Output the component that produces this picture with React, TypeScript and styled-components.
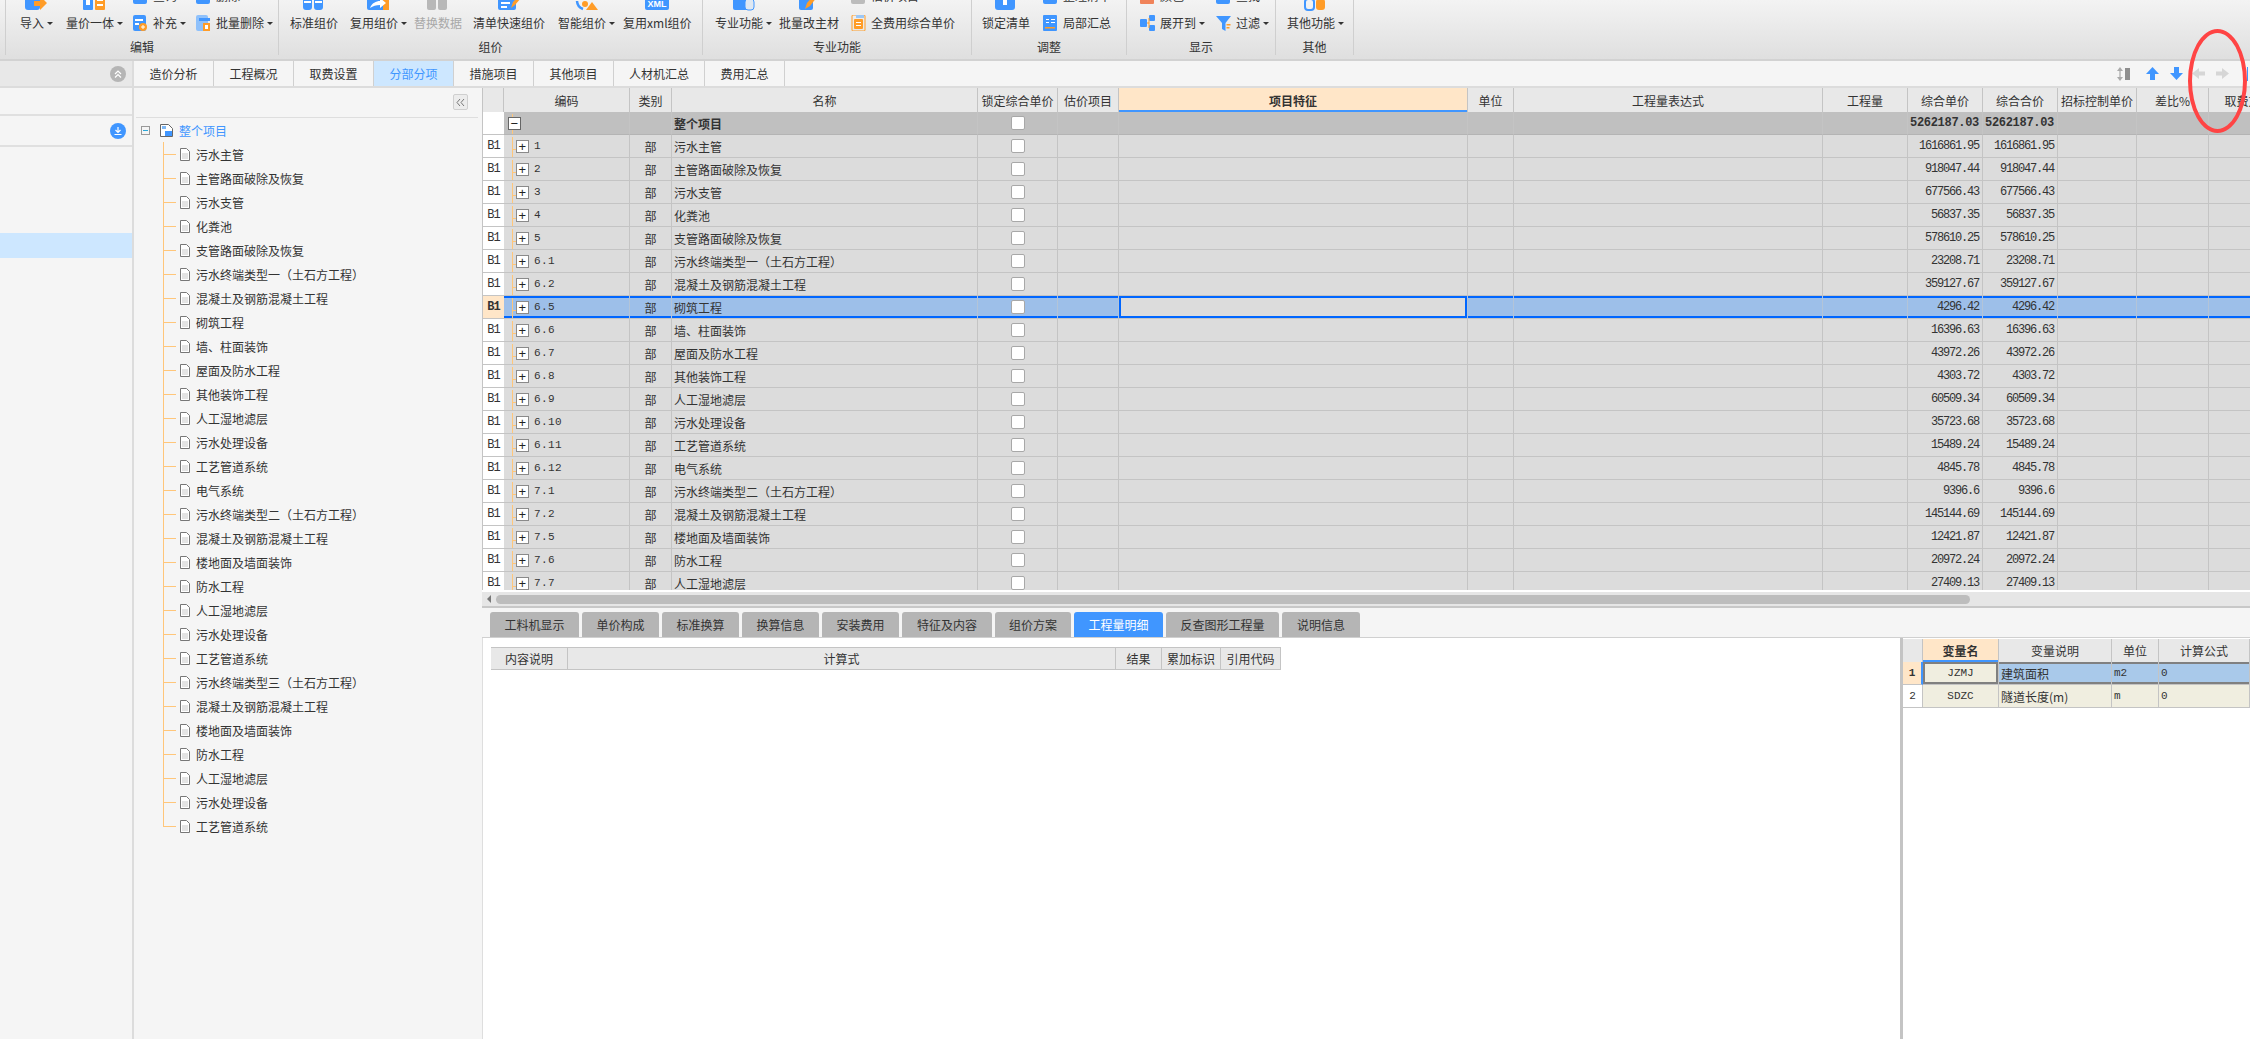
import React from 'react'
import styled, { createGlobalStyle } from 'styled-components'

const GlobalStyle = createGlobalStyle`
  html, body { margin: 0; padding: 0; background: #fff; }
  body {
    font-family: "Noto Sans CJK SC", "Noto Sans", sans-serif;
    font-size: 12px;
    color: #333;
  }
  * { box-sizing: border-box; }
`

const BLUE = '#4096ff'
const ORANGE = '#ff9c27'
const LINE = '#c4c4c4'
const MONO = '"Liberation Mono", "Noto Sans CJK SC", monospace'

const Page = styled.div`
  position: relative;
  width: 2250px;
  height: 1039px;
  overflow: hidden;
  display: flex;
  flex-direction: column;
  background: #f5f5f5;
`

/* ribbon */
const Ribbon = styled.div`
  height: 61px;
  flex: none;
  display: flex;
  align-items: flex-end;
  padding: 0 0 4px 5px;
  overflow: hidden;
  background: linear-gradient(#f3f3f3, #dfdfdf);
  border-bottom: 2px solid #d2d2d2;
`
const Group = styled.div<{ $w: number; $first?: boolean }>`
  width: ${(p) => p.$w}px;
  flex: none;
  height: 55px;
  display: flex;
  flex-direction: column;
  border-right: 1px solid #cfcfcf;
  border-left: ${(p) => (p.$first ? '1px solid #cfcfcf' : '0')};
`
const Tools = styled.div`
  height: 39px;
  flex: none;
  display: flex;
  align-items: flex-end;
  padding-bottom: 8px;
`
const GroupLabel = styled.div`
  height: 16px;
  line-height: 16px;
  text-align: center;
`
const BigTool = styled.div<{ $ml: number }>`
  margin-left: ${(p) => p.$ml}px;
  flex: none;
  display: flex;
  flex-direction: column;
  align-items: center;
  gap: 4px;
`
const ToolStack = styled.div<{ $ml: number }>`
  margin-left: ${(p) => p.$ml}px;
  flex: none;
  display: flex;
  flex-direction: column;
  gap: 11px;
`
const SmallTool = styled.div`
  display: flex;
  align-items: center;
  gap: 5px;
  height: 16px;
`
const ToolText = styled.span<{ $off?: boolean }>`
  display: flex;
  align-items: center;
  line-height: 16px;
  white-space: nowrap;
  color: ${(p) => (p.$off ? '#a8a8a8' : '#333')};
`
const Caret = styled.i`
  width: 0;
  height: 0;
  margin-left: 3px;
  border: 3px solid transparent;
  border-top: 3px solid #333;
  border-bottom: 0;
`

const icons: Record<string, React.ReactNode> = {
  importIn: (
    <>
      <rect x="1" y="3" width="15" height="20" rx="3" fill={BLUE} />
      <path d="M10 14h6v-5l7 7-7 7v-4h-6z" fill={ORANGE} />
    </>
  ),
  priceGrid: (
    <>
      <rect x="1" y="8" width="10" height="15" rx="1" fill={BLUE} />
      <rect x="13" y="8" width="10" height="15" rx="1" fill={ORANGE} />
      <path d="M4 13h4v5H4zM15 12h6v2h-6zM15 17h6v2h-6z" fill="#fff" />
    </>
  ),
  panes: (
    <>
      <rect x="2" y="4" width="9" height="19" rx="3" fill={BLUE} />
      <rect x="13" y="4" width="9" height="19" rx="3" fill={BLUE} />
      <path d="M3 14h7v2H3zM14 14h7v2h-7z" fill="#fff" />
    </>
  ),
  reuse: (
    <>
      <rect x="1" y="4" width="22" height="19" rx="2" fill={BLUE} />
      <rect x="17" y="13" width="6" height="10" fill={ORANGE} />
      <path d="M4 21c2-5 6-7 10-7v-3l6 5-6 5v-3c-4 0-7 1-10 3z" fill="#fff" />
    </>
  ),
  grayBlocks: (
    <>
      <rect x="2" y="4" width="9" height="19" rx="2" fill="#b8b8b8" />
      <rect x="13" y="4" width="9" height="19" rx="2" fill="#b8b8b8" />
    </>
  ),
  quick: (
    <>
      <rect x="2" y="4" width="18" height="19" rx="2" fill={BLUE} />
      <path d="M5 15h9v2H5zM5 19h6v2H5z" fill="#fff" />
      <path d="M15 21l2-6 6-6 2 2-6 7z" fill={ORANGE} />
    </>
  ),
  smart: (
    <>
      <path d="M3 14a9 9 0 0 0 6 8" stroke={BLUE} strokeWidth="2.5" fill="none" />
      <circle cx="11" cy="17" r="3" fill={ORANGE} />
      <path d="M12 23l6-8 6 8z" fill={ORANGE} />
    </>
  ),
  xml: (
    <>
      <rect x="1" y="2" width="24" height="21" rx="2" fill={BLUE} />
      <text x="13" y="20" textAnchor="middle" fontSize="9" fontWeight="700" fill="#fff" fontFamily="Liberation Sans">
        XML
      </text>
    </>
  ),
  device: (
    <>
      <rect x="2" y="4" width="16" height="19" rx="2" fill={BLUE} />
      <rect x="14" y="12" width="9" height="11" rx="3" fill="#dfe8f2" stroke={BLUE} />
    </>
  ),
  bulk: (
    <>
      <rect x="3" y="4" width="14" height="19" rx="2" fill={BLUE} />
      <path d="M9 22l2-6 7-8 3 2-7 9z" fill={ORANGE} />
    </>
  ),
  lock: (
    <>
      <rect x="2" y="2" width="20" height="21" rx="3" fill={BLUE} />
      <rect x="10" y="10" width="4" height="8" fill="#fff" />
    </>
  ),
  more: (
    <>
      <rect x="2" y="12" width="9" height="11" rx="3" fill="none" stroke={BLUE} strokeWidth="2" />
      <rect x="13" y="12" width="9" height="11" rx="3" fill={ORANGE} />
    </>
  ),
}

const smallIcons: Record<string, React.ReactNode> = {
  add: (
    <>
      <rect x="0" y="0" width="13" height="16" rx="2" fill={BLUE} />
      <path d="M2 4h8v2H2zM2 8h4v2H2z" fill="#fff" />
      <circle cx="10" cy="12" r="4" fill={ORANGE} />
      <path d="M8 11.5h4v1H8zM9.5 10h1v4h-1z" fill="#fff" />
    </>
  ),
  trash: (
    <>
      <rect x="0" y="0" width="12" height="16" rx="2" fill="#8fc1fb" />
      <rect x="3" y="3" width="11" height="3" fill={BLUE} />
      <rect x="7" y="8" width="7" height="8" fill={ORANGE} />
      <rect x="9" y="10" width="3" height="4" fill="#fff" />
    </>
  ),
  sum: (
    <>
      <rect x="1" y="0" width="13" height="16" rx="1" fill="none" stroke={ORANGE} />
      <rect x="3" y="4" width="9" height="10" rx="1" fill={ORANGE} />
      <path d="M5 7h5v1H5zM5 10h5v1H5z" fill="#fff" />
      <rect x="5" y="0" width="8" height="3" fill="#9cc7f5" />
    </>
  ),
  local: (
    <>
      <rect x="0" y="0" width="14" height="16" rx="1" fill={BLUE} />
      <path d="M3 4h3v1H3zM8 4h4v1H8zM3 7h3v1H3zM8 7h4v1H8z" fill="#fff" />
      <rect x="2" y="12" width="10" height="1.5" fill={ORANGE} />
    </>
  ),
  tree: (
    <>
      <rect x="0" y="4" width="7" height="8" rx="1" fill={BLUE} />
      <rect x="9" y="0" width="6" height="6" rx="1" fill={BLUE} />
      <rect x="9" y="10" width="6" height="6" rx="1" fill={BLUE} />
      <path d="M7 8h2M9 3v10" stroke={ORANGE} />
    </>
  ),
  filter: (
    <>
      <path d="M0 1h15L9.5 8v8L6 14V8z" fill={BLUE} />
      <path d="M10.5 9h4v1.4h-4zM10.5 12h3v1.4h-3z" fill={ORANGE} />
    </>
  ),
  plain: <rect x="0" y="0" width="14" height="16" rx="2" fill={BLUE} />,
  warm: <rect x="0" y="8" width="14" height="8" rx="1" fill="#f0835a" />,
  gray: <rect x="0" y="0" width="14" height="16" rx="2" fill="#bcbcbc" />,
}

const BigIcon = ({ kind }: { kind: string }) => (
  <svg width="26" height="24" viewBox="0 0 26 24" style={{ marginTop: -13 }}>
    {icons[kind]}
  </svg>
)
const SmallIcon = ({ kind }: { kind: string }) => (
  <svg width="15" height="16" viewBox="0 0 15 16">
    {smallIcons[kind]}
  </svg>
)

const Big = ({ ml, icon, label, menu, off }: { ml: number; icon: string; label: string; menu?: boolean; off?: boolean }) => (
  <BigTool $ml={ml}>
    <BigIcon kind={icon} />
    <ToolText $off={off}>
      {label}
      {menu && <Caret />}
    </ToolText>
  </BigTool>
)

const Small = ({ ml, top, topIcon, icon, label, menu }: { ml: number; top: string; topIcon: string; icon: string; label: string; menu?: boolean }) => (
  <ToolStack $ml={ml}>
    <SmallTool>
      <SmallIcon kind={topIcon} />
      <ToolText>{top}</ToolText>
    </SmallTool>
    <SmallTool>
      <SmallIcon kind={icon} />
      <ToolText>
        {label}
        {menu && <Caret />}
      </ToolText>
    </SmallTool>
  </ToolStack>
)

/* workspace */
const Body = styled.div`
  flex: 1;
  min-height: 0;
  display: flex;
`
const LeftNav = styled.div`
  width: 134px;
  flex: none;
  display: flex;
  flex-direction: column;
  border-right: 2px solid #dcdcdc;
`
const NavHead = styled.div`
  height: 27px;
  flex: none;
  display: flex;
  align-items: center;
  justify-content: flex-end;
  padding-right: 6px;
  background: #e8e8e8;
  border-bottom: 2px solid #dcdcdc;
`
const NavBlank = styled.div<{ $h: number; $line?: boolean }>`
  height: ${(p) => p.$h}px;
  flex: none;
  display: flex;
  align-items: center;
  justify-content: flex-end;
  padding-right: 6px;
  border-bottom: ${(p) => (p.$line ? '2px solid #e0e0e0' : '0')};
`
const NavActive = styled.div`
  height: 25px;
  flex: none;
  background: #cde7ff;
`
const RoundIcon = styled.span<{ $bg: string }>`
  width: 16px;
  height: 16px;
  border-radius: 50%;
  background: ${(p) => p.$bg};
  display: flex;
  align-items: center;
  justify-content: center;
`
const Main = styled.div`
  flex: 1;
  min-width: 0;
  display: flex;
  flex-direction: column;
`
const TabBar = styled.div`
  height: 27px;
  flex: none;
  display: flex;
  align-items: stretch;
  border-bottom: 2px solid #dcdcdc;
`
const PageTab = styled.div<{ $w: number; $active?: boolean }>`
  width: ${(p) => p.$w}px;
  flex: none;
  display: flex;
  align-items: center;
  justify-content: center;
  border-right: 1px solid #d0d0d0;
  background: ${(p) => (p.$active ? '#cde7ff' : 'transparent')};
  color: ${(p) => (p.$active ? BLUE : '#333')};
`
const TabTools = styled.div`
  margin-left: auto;
  display: flex;
  align-items: center;
  width: 133px;
  gap: 9px;
`
const ArrowSvg = styled.svg<{ $ml?: number }>`
  flex: none;
  margin-left: ${(p) => p.$ml ?? 0}px;
`
const NextToolEdge = styled.span`
  width: 1px;
  height: 14px;
  flex: none;
  margin-left: 8px;
  background: ${BLUE};
`
const Content = styled.div`
  flex: 1;
  min-height: 0;
  display: flex;
`

/* tree */
const TreePanel = styled.div`
  width: 348px;
  flex: none;
  display: flex;
  flex-direction: column;
`
const TreeTop = styled.div`
  height: 30px;
  flex: none;
  margin: 0 4px 0 2px;
  display: flex;
  align-items: center;
  justify-content: flex-end;
  padding: 0 10px 1px 0;
  border-bottom: 1px solid #dedede;
`
const FoldButton = styled.span`
  width: 15px;
  height: 16px;
  border: 1px solid #cfcfcf;
  border-radius: 2px;
  background: #ececec;
  display: flex;
  align-items: center;
  justify-content: center;
`
const Tree = styled.div``
const TreeRoot = styled.div`
  height: 24px;
  display: flex;
  align-items: center;
  padding-left: 7px;
  color: ${BLUE};
`
const TreeToggle = styled.span`
  width: 9px;
  height: 9px;
  border: 1px solid #999;
  display: flex;
  align-items: center;
  justify-content: center;
  margin-right: 10px;
  &::after {
    content: '';
    width: 5px;
    height: 1px;
    background: #2aa7d8;
  }
`
const TreeItem = styled.div<{ $last?: boolean }>`
  position: relative;
  height: 24px;
  display: flex;
  align-items: center;
  gap: 6px;
  padding-left: 46px;
  white-space: nowrap;
  &::before {
    content: '';
    position: absolute;
    left: 29px;
    top: 0;
    width: 13px;
    height: ${(p) => (p.$last ? '12px' : '24px')};
    border-left: 1px solid #ffc67a;
  }
  &::after {
    content: '';
    position: absolute;
    left: 29px;
    top: 12px;
    width: 13px;
    height: 1px;
    background: #ffc67a;
  }
`
const DocIcon = () => (
  <svg width="10" height="13" viewBox="0 0 10 13">
    <path d="M.5.5h6l3 3v9h-9z" fill="#fff" stroke="#777" />
    <path d="M2 6h6M2 8h6M2 10h6" stroke="#c8c8c8" />
  </svg>
)

/* main grid */
const RightPane = styled.div`
  flex: 1;
  min-width: 0;
  display: flex;
  flex-direction: column;
`
const GridWrap = styled.div`
  height: 502px;
  flex: none;
  overflow: hidden;
  background: #fff;
  border-left: 1px solid ${LINE};
`
const columns = '21px 126px 42px 306px 80px 61px 349px 46px 309px 85px 75px 75px 79px 72px 80px'
const GridRow = styled.div`
  display: grid;
  grid-template-columns: ${columns};
  height: 23px;
`
const HeadRow = styled(GridRow)`
  height: 24px;
`
const HeadCell = styled.div<{ $hot?: boolean }>`
  display: flex;
  align-items: center;
  justify-content: center;
  white-space: nowrap;
  overflow: hidden;
  border-right: 1px solid ${LINE};
  background: ${(p) => (p.$hot ? '#ffe6c8' : '#e8e8e8')};
  font-weight: ${(p) => (p.$hot ? 700 : 400)};
  box-shadow: ${(p) => (p.$hot ? `inset 0 -2px 0 ${BLUE}` : 'none')};
`
const RowHead = styled.div<{ $on?: boolean }>`
  display: flex;
  align-items: center;
  justify-content: center;
  font-family: ${MONO};
  font-size: 12px;
  letter-spacing: -1px;
  font-weight: ${(p) => (p.$on ? 700 : 400)};
  background: ${(p) => (p.$on ? '#ffe6c8' : '#fff')};
  border-bottom: 1px solid ${LINE};
`
const Cell = styled.div<{ $root?: boolean; $on?: boolean; $align?: string }>`
  display: flex;
  align-items: center;
  justify-content: ${(p) => p.$align ?? 'flex-start'};
  padding: 0 2px;
  white-space: nowrap;
  overflow: hidden;
  background: ${(p) => (p.$root ? '#c0c0c0' : p.$on ? '#9dbfe9' : '#dcdcdc')};
  border-right: 1px solid ${(p) => (p.$on ? '#b3c4d8' : LINE)};
  border-bottom: 1px solid ${(p) => (p.$root ? '#b4b4b4' : LINE)};
  font-weight: ${(p) => (p.$root ? 700 : 400)};
  box-shadow: ${(p) => (p.$on ? 'inset 0 2px 0 #0066ff, inset 0 -2px 0 #0066ff' : 'none')};
`
const FeatureCell = styled(Cell)`
  background: ${(p) => (p.$root ? '#c0c0c0' : '#dcdcdc')};
  box-shadow: ${(p) =>
    p.$on ? 'inset 2px 2px 0 #0066ff, inset -2px -2px 0 #0066ff' : 'none'};
`
const CodeCell = styled(Cell)`
  position: relative;
  padding-left: 12px;
  gap: 5px;
  font-family: ${MONO};
  font-size: 11px;
  letter-spacing: 0.4px;
  font-weight: 400;
  &::before {
    content: '';
    position: absolute;
    left: 8px;
    top: 2px;
    bottom: 0;
    width: 5px;
    height: 12px;
    border-left: 1px solid #ffc67a;
    border-bottom: 1px solid #ffc67a;
  }
  &::after {
    content: '';
    position: absolute;
    left: 8px;
    top: 12px;
    bottom: -1px;
    border-left: 1px solid #ffc67a;
  }
`
const Expander = styled.span`
  position: relative;
  z-index: 1;
  width: 13px;
  height: 13px;
  flex: none;
  background: #fff;
  border: 1px solid #8a8a8a;
  display: flex;
  align-items: center;
  justify-content: center;
  font-family: "Liberation Sans", sans-serif;
  font-size: 13px;
  line-height: 11px;
  color: #222;
`
const RootExpander = styled(Expander)`
  margin-left: -8px;
  border-color: #666;
`
const Money = styled.span<{ $bold?: boolean }>`
  font-family: ${MONO};
  font-size: 12px;
  letter-spacing: ${(p) => (p.$bold ? '-0.3px' : '-1.2px')};
  font-weight: ${(p) => (p.$bold ? 700 : 400)};
  padding-right: 1px;
`
const Check = styled.span`
  width: 14px;
  height: 14px;
  border: 1px solid #a8a8a8;
  border-radius: 2px;
  background: #fff;
`

/* scrollbar */
const HScroll = styled.div`
  height: 18px;
  flex: none;
  padding: 2px 0 0;
  background: #fff;
  border-bottom: 2px solid #c8c8c8;
`
const ScrollTrack = styled.div`
  height: 14px;
  display: flex;
  align-items: center;
  padding-left: 5px;
  background: #e6e6e6;
`
const ScrollArrow = styled.i`
  width: 0;
  height: 0;
  border: 4px solid transparent;
  border-right: 4px solid #777;
  border-left: 0;
  margin-right: 5px;
`
const ScrollThumb = styled.div`
  width: 1474px;
  height: 9px;
  border-radius: 5px;
  background: #bdbdbd;
`

/* lower panes */
const BottomTabs = styled.div`
  height: 30px;
  flex: none;
  display: flex;
  align-items: flex-end;
  gap: 3px;
  padding-left: 8px;
  border-bottom: 1px solid #d0d0d0;
`
const BottomTab = styled.div<{ $w: number; $active?: boolean }>`
  width: ${(p) => p.$w}px;
  height: 25px;
  border-radius: 3px 3px 0 0;
  display: flex;
  align-items: center;
  justify-content: center;
  background: ${(p) => (p.$active ? BLUE : '#b5b5b5')};
  color: ${(p) => (p.$active ? '#fff' : '#333')};
`
const Lower = styled.div`
  flex: 1;
  min-height: 0;
  display: flex;
  background: #fff;
  border-left: 1px solid #dedede;
`
const DetailPane = styled.div`
  width: 1417px;
  flex: none;
  padding: 9px 0 0 8px;
`
const DetailHead = styled.div`
  display: grid;
  grid-template-columns: 77px 548px 46px 59px 60px;
  width: 790px;
  height: 23px;
  border-top: 1px solid ${LINE};
  border-bottom: 1px solid ${LINE};
`
const VarPane = styled.div`
  flex: 1;
  border-left: 3px solid #c4c4c4;
  padding-top: 1px;
`
const varColumns = '20px 76px 113px 47px 91px'
const VarHead = styled.div`
  display: grid;
  grid-template-columns: ${varColumns};
  height: 23px;
`
const VarRow = styled.div`
  display: grid;
  grid-template-columns: ${varColumns};
  height: 23px;
`
const VarIndex = styled.div<{ $on?: boolean }>`
  display: flex;
  align-items: center;
  justify-content: center;
  font-family: ${MONO};
  font-size: 11px;
  font-weight: ${(p) => (p.$on ? 700 : 400)};
  background: ${(p) => (p.$on ? '#ffe6c8' : '#fff')};
  border-right: ${(p) => (p.$on ? `2px solid ${BLUE}` : `1px solid ${LINE}`)};
  border-bottom: 1px solid ${LINE};
`
const VarCell = styled.div<{ $on?: boolean; $key?: boolean; $mono?: boolean }>`
  display: flex;
  align-items: center;
  justify-content: ${(p) => (p.$key ? 'center' : 'flex-start')};
  padding: 0 2px;
  white-space: nowrap;
  font-family: ${(p) => (p.$mono || p.$key ? MONO : 'inherit')};
  font-size: ${(p) => (p.$mono || p.$key ? '11px' : '12px')};
  background: ${(p) => (p.$on && !p.$key ? '#a9c9ea' : '#f0eee0')};
  border-right: 1px solid ${LINE};
  border-bottom: 1px solid ${LINE};
  box-shadow: ${(p) =>
    !p.$on
      ? 'none'
      : p.$key
        ? 'inset 0 0 0 2px #808080'
        : 'inset 0 2px 0 #808080, inset 0 -2px 0 #808080'};
`

/* hand drawn red mark over the arrows */
const RedMark = styled.div`
  position: absolute;
  left: 2188px;
  top: 29px;
  width: 59px;
  height: 104px;
  border: 4px solid #ff4444;
  border-radius: 50%;
  pointer-events: none;
`

const rows: [string, string, string][] = [
  ['1', '污水主管', '1616861.95'],
  ['2', '主管路面破除及恢复', '918047.44'],
  ['3', '污水支管', '677566.43'],
  ['4', '化粪池', '56837.35'],
  ['5', '支管路面破除及恢复', '578610.25'],
  ['6.1', '污水终端类型一（土石方工程）', '23208.71'],
  ['6.2', '混凝土及钢筋混凝土工程', '359127.67'],
  ['6.5', '砌筑工程', '4296.42'],
  ['6.6', '墙、柱面装饰', '16396.63'],
  ['6.7', '屋面及防水工程', '43972.26'],
  ['6.8', '其他装饰工程', '4303.72'],
  ['6.9', '人工湿地滤层', '60509.34'],
  ['6.10', '污水处理设备', '35723.68'],
  ['6.11', '工艺管道系统', '15489.24'],
  ['6.12', '电气系统', '4845.78'],
  ['7.1', '污水终端类型二（土石方工程）', '9396.6'],
  ['7.2', '混凝土及钢筋混凝土工程', '145144.69'],
  ['7.5', '楼地面及墙面装饰', '12421.87'],
  ['7.6', '防水工程', '20972.24'],
  ['7.7', '人工湿地滤层', '27409.13'],
]

const treeItems = [
  '污水主管', '主管路面破除及恢复', '污水支管', '化粪池', '支管路面破除及恢复',
  '污水终端类型一（土石方工程）', '混凝土及钢筋混凝土工程', '砌筑工程', '墙、柱面装饰',
  '屋面及防水工程', '其他装饰工程', '人工湿地滤层', '污水处理设备', '工艺管道系统', '电气系统',
  '污水终端类型二（土石方工程）', '混凝土及钢筋混凝土工程', '楼地面及墙面装饰', '防水工程',
  '人工湿地滤层', '污水处理设备', '工艺管道系统',
  '污水终端类型三（土石方工程）', '混凝土及钢筋混凝土工程', '楼地面及墙面装饰', '防水工程',
  '人工湿地滤层', '污水处理设备', '工艺管道系统',
]

const pageTabs: [string, number][] = [
  ['造价分析', 80], ['工程概况', 80], ['取费设置', 80], ['分部分项', 80],
  ['措施项目', 80], ['其他项目', 80], ['人材机汇总', 91], ['费用汇总', 80],
]

const bottomTabs: [string, number][] = [
  ['工料机显示', 89], ['单价构成', 77], ['标准换算', 77], ['换算信息', 77], ['安装费用', 77],
  ['特征及内容', 90], ['组价方案', 76], ['工程量明细', 89], ['反查图形工程量', 113], ['说明信息', 78],
]

const heads = ['', '编码', '类别', '名称', '锁定综合单价', '估价项目', '项目特征', '单位', '工程量表达式', '工程量', '综合单价', '综合合价', '招标控制单价', '差比%', '取费文件']

const Arrow = ({ d, fill, ml }: { d: string; fill: string; ml?: number }) => (
  <ArrowSvg $ml={ml} width="15" height="15" viewBox="0 0 15 15">
    <path d={d} fill={fill} />
  </ArrowSvg>
)

export default function App() {
  return (
    <Page>
      <GlobalStyle />
      <Ribbon>
        <Group $w={274} $first>
          <Tools>
            <Big ml={14} icon="importIn" label="导入" menu />
            <Big ml={13} icon="priceGrid" label="量价一体" menu />
            <Small ml={10} top="查询" topIcon="plain" icon="add" label="补充" menu />
            <Small ml={10} top="删除" topIcon="plain" icon="trash" label="批量删除" menu />
          </Tools>
          <GroupLabel>编辑</GroupLabel>
        </Group>
        <Group $w={424}>
          <Tools>
            <Big ml={11} icon="panes" label="标准组价" />
            <Big ml={12} icon="reuse" label="复用组价" menu />
            <Big ml={7} icon="grayBlocks" label="替换数据" off />
            <Big ml={11} icon="quick" label="清单快速组价" />
            <Big ml={13} icon="smart" label="智能组价" menu />
            <Big ml={8} icon="xml" label="复用xml组价" />
          </Tools>
          <GroupLabel>组价</GroupLabel>
        </Group>
        <Group $w={269}>
          <Tools>
            <Big ml={12} icon="device" label="专业功能" menu />
            <Big ml={7} icon="bulk" label="批量改主材" />
            <Small ml={12} top="估价项目" topIcon="gray" icon="sum" label="全费用综合单价" />
          </Tools>
          <GroupLabel>专业功能</GroupLabel>
        </Group>
        <Group $w={155}>
          <Tools>
            <Big ml={10} icon="lock" label="锁定清单" />
            <Small ml={13} top="整理清单" topIcon="plain" icon="local" label="局部汇总" />
          </Tools>
          <GroupLabel>调整</GroupLabel>
        </Group>
        <Group $w={149}>
          <Tools>
            <Small ml={13} top="颜色" topIcon="warm" icon="tree" label="展开到" menu />
            <Small ml={11} top="查找" topIcon="plain" icon="filter" label="过滤" menu />
          </Tools>
          <GroupLabel>显示</GroupLabel>
        </Group>
        <Group $w={78}>
          <Tools>
            <Big ml={11} icon="more" label="其他功能" menu />
          </Tools>
          <GroupLabel>其他</GroupLabel>
        </Group>
      </Ribbon>

      <Body>
        <LeftNav>
          <NavHead>
            <RoundIcon $bg="#b5b5b5">
              <svg width="10" height="10" viewBox="0 0 10 10">
                <path d="M2 5l3-3 3 3M2 8.5l3-3 3 3" stroke="#fff" strokeWidth="1.2" fill="none" />
              </svg>
            </RoundIcon>
          </NavHead>
          <NavBlank $h={28} $line />
          <NavBlank $h={31} $line>
            <RoundIcon $bg={BLUE}>
              <svg width="10" height="10" viewBox="0 0 10 10">
                <path d="M5 1v5M2.5 4L5 6.5 7.5 4M1.5 8.5h7" stroke="#fff" strokeWidth="1.2" fill="none" />
              </svg>
            </RoundIcon>
          </NavBlank>
          <NavBlank $h={86} />
          <NavActive />
        </LeftNav>

        <Main>
          <TabBar>
            {pageTabs.map(([label, w]) => (
              <PageTab key={label} $w={w} $active={label === '分部分项'}>
                {label}
              </PageTab>
            ))}
            <TabTools>
              <svg width="14" height="14" viewBox="0 0 14 14">
                <path d="M3 0l3 4H0zM3 14l3-4H0z" fill="#aaa" />
                <rect x="2.4" y="4" width="1.2" height="6" fill="#aaa" />
                <rect x="8" y="1" width="5" height="12" fill="#8e8e8e" />
              </svg>
              <Arrow ml={5} d="M7.5 1L14 8h-4v6H5V8H1z" fill={BLUE} />
              <Arrow d="M7.5 14L14 7h-4V1H5v6H1z" fill={BLUE} />
              <Arrow ml={-2} d="M1 7.5L8 2v3.5h6v4H8V13z" fill="#d6d6d6" />
              <Arrow d="M14 7.5L7 2v3.5H1v4h6V13z" fill="#d6d6d6" />
              <NextToolEdge />
            </TabTools>
          </TabBar>

          <Content>
            <TreePanel>
              <TreeTop>
                <FoldButton>
                  <svg width="9" height="9" viewBox="0 0 9 9">
                    <path d="M4 1L1 4.5 4 8M8 1L5 4.5 8 8" stroke="#777" fill="none" />
                  </svg>
                </FoldButton>
              </TreeTop>
              <Tree>
                <TreeRoot>
                  <TreeToggle />
                  <svg width="13" height="13" viewBox="0 0 13 13" style={{ marginRight: 6 }}>
                    <path d="M.5.5h8l4 4v8H.5z" fill="#fff" stroke="#666" />
                    <rect x="2" y="2" width="4" height="3" fill="#7db7f5" />
                    <rect x="5" y="7" width="7" height="5" fill={BLUE} />
                  </svg>
                  整个项目
                </TreeRoot>
                {treeItems.map((name, i) => (
                  <TreeItem key={i} $last={i === treeItems.length - 1}>
                    <DocIcon />
                    {name}
                  </TreeItem>
                ))}
              </Tree>
            </TreePanel>

            <RightPane>
              <GridWrap>
                <HeadRow>
                  {heads.map((h, i) => (
                    <HeadCell key={i} $hot={h === '项目特征'}>
                      {h}
                    </HeadCell>
                  ))}
                </HeadRow>
                <GridRow>
                  <RowHead />
                  <CodeCell $root>
                    <RootExpander>−</RootExpander>
                  </CodeCell>
                  <Cell $root />
                  <Cell $root>整个项目</Cell>
                  <Cell $root $align="center">
                    <Check />
                  </Cell>
                  <Cell $root />
                  <Cell $root />
                  <Cell $root />
                  <Cell $root />
                  <Cell $root />
                  <Cell $root $align="flex-end">
                    <Money $bold>5262187.03</Money>
                  </Cell>
                  <Cell $root $align="flex-end">
                    <Money $bold>5262187.03</Money>
                  </Cell>
                  <Cell $root />
                  <Cell $root />
                  <Cell $root />
                </GridRow>
                {rows.map(([code, name, money]) => {
                  const on = code === '6.5'
                  return (
                    <GridRow key={code}>
                      <RowHead $on={on}>B1</RowHead>
                      <CodeCell $on={on}>
                        <Expander>+</Expander>
                        {code}
                      </CodeCell>
                      <Cell $on={on} $align="center">部</Cell>
                      <Cell $on={on}>{name}</Cell>
                      <Cell $on={on} $align="center">
                        <Check />
                      </Cell>
                      <Cell $on={on} />
                      <FeatureCell $on={on} />
                      <Cell $on={on} />
                      <Cell $on={on} />
                      <Cell $on={on} />
                      <Cell $on={on} $align="flex-end">
                        <Money>{money}</Money>
                      </Cell>
                      <Cell $on={on} $align="flex-end">
                        <Money>{money}</Money>
                      </Cell>
                      <Cell $on={on} />
                      <Cell $on={on} />
                      <Cell $on={on} />
                    </GridRow>
                  )
                })}
              </GridWrap>

              <HScroll>
                <ScrollTrack>
                  <ScrollArrow />
                  <ScrollThumb />
                </ScrollTrack>
              </HScroll>

              <BottomTabs>
                {bottomTabs.map(([label, w]) => (
                  <BottomTab key={label} $w={w} $active={label === '工程量明细'}>
                    {label}
                  </BottomTab>
                ))}
              </BottomTabs>

              <Lower>
                <DetailPane>
                  <DetailHead>
                    {['内容说明', '计算式', '结果', '累加标识', '引用代码'].map((h) => (
                      <HeadCell key={h}>{h}</HeadCell>
                    ))}
                  </DetailHead>
                </DetailPane>
                <VarPane>
                  <VarHead>
                    <HeadCell />
                    <HeadCell $hot>变量名</HeadCell>
                    <HeadCell>变量说明</HeadCell>
                    <HeadCell>单位</HeadCell>
                    <HeadCell>计算公式</HeadCell>
                  </VarHead>
                  <VarRow>
                    <VarIndex $on>1</VarIndex>
                    <VarCell $on $key>JZMJ</VarCell>
                    <VarCell $on>建筑面积</VarCell>
                    <VarCell $on $mono>m2</VarCell>
                    <VarCell $on $mono>0</VarCell>
                  </VarRow>
                  <VarRow>
                    <VarIndex>2</VarIndex>
                    <VarCell $key>SDZC</VarCell>
                    <VarCell>隧道长度(m)</VarCell>
                    <VarCell $mono>m</VarCell>
                    <VarCell $mono>0</VarCell>
                  </VarRow>
                </VarPane>
              </Lower>
            </RightPane>
          </Content>
        </Main>
      </Body>
      <RedMark />
    </Page>
  )
}
